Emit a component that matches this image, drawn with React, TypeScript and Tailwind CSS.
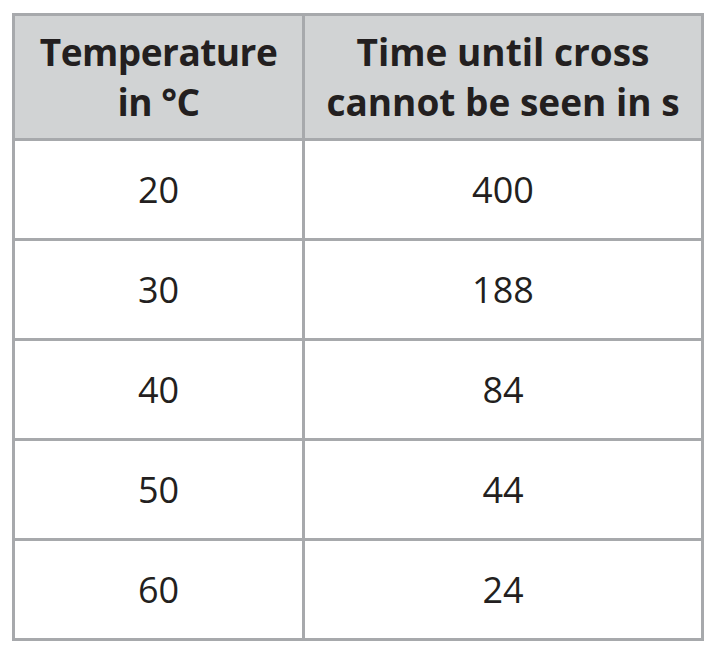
const rows = [
  ['20', '400'],
  ['30', '188'],
  ['40', '84'],
  ['50', '44'],
  ['60', '24'],
];

export default function App() {
  return (
    <div className="min-h-[651px] bg-white pl-[12px] pt-[13px] font-['Open_Sans',sans-serif] text-[#231f20]">
      <table className="w-[692px] border-collapse border-[3px] border-[#a7a9ac] table-fixed">
        <colgroup>
          <col className="w-[290px]" />
          <col className="w-[399px]" />
        </colgroup>
        <thead>
          <tr className="bg-[#d1d3d4] h-[125px]">
            <th className="border-[3px] border-[#a7a9ac] text-[37px] leading-[50px] font-bold tracking-[-0.5px]">
              Temperature<br />in °C
            </th>
            <th className="border-[3px] border-[#a7a9ac] text-[37px] leading-[50px] font-bold tracking-[0px]">
              Time until cross<br />cannot be seen in s
            </th>
          </tr>
        </thead>
        <tbody>
          {rows.map(([t, s]) => (
            <tr key={t} className="h-[100px]">
              <td className="border-[3px] border-[#a7a9ac] text-center text-[36px]">{t}</td>
              <td className="border-[3px] border-[#a7a9ac] text-center text-[36px]">{s}</td>
            </tr>
          ))}
        </tbody>
      </table>
    </div>
  );
}
